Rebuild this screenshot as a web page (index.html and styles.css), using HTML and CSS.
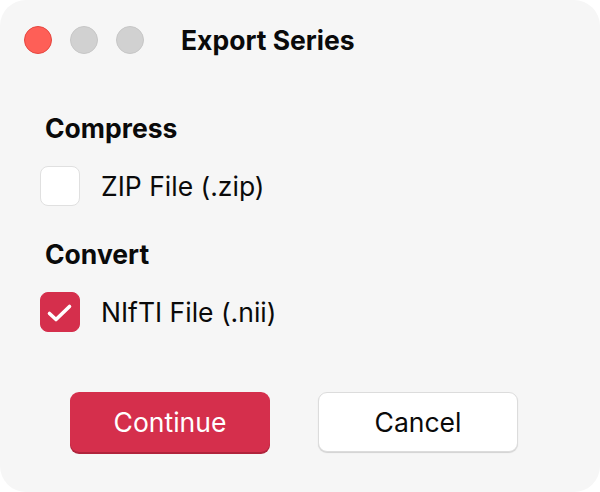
FILE: index.html
```html
<!DOCTYPE html>
<html>
<head>
<meta charset="utf-8">
<link rel="stylesheet" href="styles.css">
</head>
<body>
<div class="window">
  <div class="titlebar">
    <div class="lights">
      <span class="light close"></span>
      <span class="light"></span>
      <span class="light"></span>
    </div>
    <div class="title">Export Series</div>
  </div>
  <div class="content">
    <div class="section-title">Compress</div>
    <label class="option">
      <span class="box"></span>
      <span class="label">ZIP File (.zip)</span>
    </label>
    <div class="section-title second">Convert</div>
    <label class="option">
      <span class="box checked">
        <svg width="38" height="38" viewBox="0 0 38 38"><path d="M8.5 20.5 L15 26.5 L28.5 13.5" fill="none" stroke="#fff" stroke-width="3.6" stroke-linecap="round" stroke-linejoin="round"/></svg>
      </span>
      <span class="label">NIfTI File (.nii)</span>
    </label>
  </div>
  <div class="buttons">
    <button class="btn primary">Continue</button>
    <button class="btn secondary">Cancel</button>
  </div>
</div>
</body>
</html>
```

FILE: styles.css
```css
html, body {
  margin: 0;
  padding: 0;
  background: #ffffff;
}
body {
  font-family: Inter, "Liberation Sans", sans-serif;
  color: #0a0a0a;
}
.window {
  width: 600px;
  height: 492px;
  box-sizing: border-box;
  background: #f6f6f6;
  border-radius: 26px;
  display: flex;
  flex-direction: column;
  overflow: hidden;
}
.titlebar {
  display: flex;
  align-items: center;
  height: 40px;
  padding: 20px 0 0 24px;
}
.lights {
  display: flex;
  gap: 18px;
}
.light {
  width: 26px;
  height: 26px;
  border-radius: 50%;
  background: #d1d1d1;
  border: 1px solid #c6c6c6;
}
.light.close {
  background: #fe5f57;
  border-color: #e5463f;
}
.title {
  margin-left: 37px;
  font-size: 26.5px;
  font-weight: 700;
}
.content {
  padding: 70px 0 0 40px;
  display: flex;
  flex-direction: column;
}
.section-title {
  font-size: 26.5px;
  font-weight: 700;
  margin-left: 5px;
  line-height: 30px;
  margin-top: -17px;
}
.section-title.second {
  margin-top: 33px;
}
.option {
  display: flex;
  align-items: center;
  gap: 21px;
  margin-top: 23px;
}
.box {
  width: 38px;
  height: 38px;
  border-radius: 8px;
  background: #fff;
  border: 1px solid #e0e0e0;
  display: flex;
  align-items: center;
  justify-content: center;
}
.box.checked {
  background: #d52f4c;
  border-color: #d52f4c;
}
.label {
  font-size: 26.5px;
  line-height: 30px;
}
.buttons {
  display: flex;
  gap: 48px;
  padding: 60px 0 0 70px;
}
.btn {
  width: 200px;
  height: 60px;
  border-radius: 9px;
  font-family: Inter, "Liberation Sans", sans-serif;
  font-size: 26.5px;
  cursor: pointer;
}
.btn.primary {
  background: #d52f4c;
  color: #fff;
  border: none;
  box-shadow: 0 2px 0 #b0243c;
}
.btn.secondary {
  background: #fff;
  color: #0a0a0a;
  border: 1px solid #dcdcdc;
  box-shadow: 0 1px 1px rgba(0,0,0,0.15);
}
```
